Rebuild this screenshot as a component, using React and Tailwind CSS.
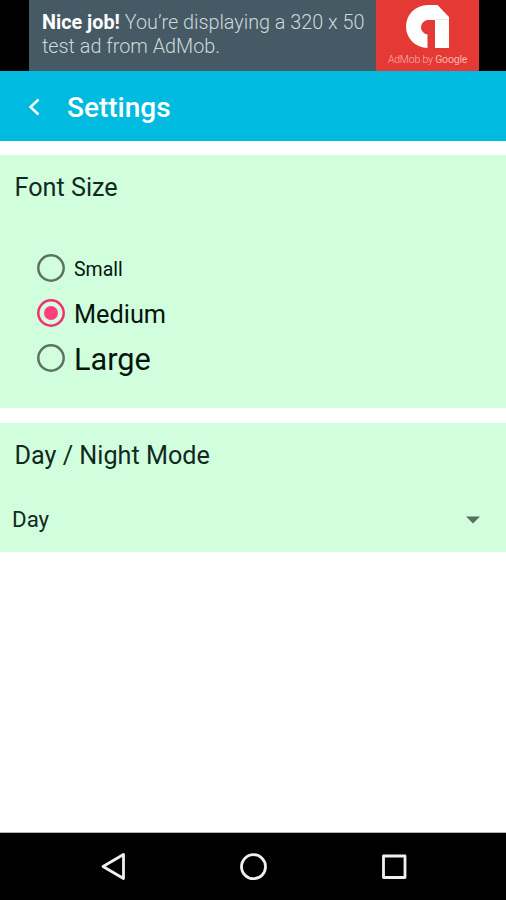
const FONT_SIZES = [
  { label: 'Small', text: 'text-[19.5px] mt-[4px]' },
  { label: 'Medium', text: 'text-[25.3px] mt-[4px]', checked: true },
  { label: 'Large', text: 'text-[30.7px] mt-[5px]' },
];

const AdMobLogo = () => (
  <svg width="44" height="44" viewBox="0 0 44 44" className="mt-[5px]">
    <path
      d="M21.5 0H31.5L43 12V43H29V15H21.5A7.3 7.3 0 0 0 21.5 29.5V43A21.5 21.5 0 0 1 21.5 0Z"
      fill="#fff"
    />
    <path d="M29 14.5H42.5" stroke="#e4e4e4" strokeWidth="0.8" />
  </svg>
);

const AdBanner = () => (
  <div className="h-[71px] flex pl-[29px] bg-black">
    <div className="w-[347px] pl-[13px] pt-[11px] bg-[#455a64] text-[19.8px] leading-[24px] text-[#cfd8dc] font-light whitespace-nowrap">
      <div><b className="font-bold text-white">Nice job!</b> You’re displaying a 320 x 50</div>
      <div>test ad from AdMob.</div>
    </div>
    <div className="w-[103px] flex flex-col items-center bg-[#e53935]">
      <AdMobLogo />
      <span className="mt-[4px] text-[10.5px] leading-[13px] tracking-[-0.2px] font-light text-[#f5b5b3] whitespace-nowrap">
        AdMob by <span className="font-normal">Google</span>
      </span>
    </div>
  </div>
);

const Header = () => (
  <header className="h-[70px] flex items-center bg-[#00badf] text-white">
    <svg width="12" height="18" viewBox="0 0 12 18" className="ml-[28px] mt-[2px]" fill="none" stroke="#fff" strokeWidth="2.4">
      <path d="M10.5 1.5L2.5 9L10.5 16.5" />
    </svg>
    <h1 className="ml-[27px] mt-[3px] text-[28px] leading-8 font-medium">Settings</h1>
  </header>
);

const Radio = ({ checked }) => (
  <svg width="28" height="28" viewBox="0 0 28 28" fill="none" className="shrink-0">
    <circle cx="14" cy="14" r="12.7" strokeWidth="2.5" stroke={checked ? '#f52d74' : '#5c7363'} />
    {checked && <circle cx="14" cy="14" r="7" fill="#ff3d7f" />}
  </svg>
);

const NavBar = () => (
  <nav className="h-[68px] flex bg-black border-t border-[#b5b5b5]">
    <svg width="506" height="67" viewBox="0 0 506 67" fill="none" stroke="#f0f0f0" strokeWidth="2.8" strokeLinejoin="round">
      <path d="M123.5 21.5V45.5L103 33.5Z" />
      <circle cx="253.5" cy="33.7" r="12" />
      <rect x="383.5" y="23" width="21.5" height="21.5" />
    </svg>
  </nav>
);

export default function App() {
  return (
    <div className="w-[506px] h-[900px] flex flex-col overflow-hidden bg-white font-['Roboto',sans-serif]">
      <AdBanner />
      <Header />

      <main className="flex-1 flex flex-col gap-[15px] pt-[14px]">
        {/* Font size */}
        <section className="h-[253px] bg-[#d1ffde] pt-[17px]">
          <h2 className="ml-[14.5px] text-[25.2px] leading-8 text-[#12291f]">Font Size</h2>
          <div className="ml-[37px] mt-[41px]">
            {FONT_SIZES.map((size) => (
              <label key={size.label} className="h-[45px] flex items-center gap-[9px]">
                <Radio checked={size.checked} />
                <span className={`${size.text} leading-8 text-[#07150c]`}>{size.label}</span>
              </label>
            ))}
          </div>
        </section>

        {/* Day / night mode */}
        <section className="h-[129px] bg-[#d1ffde] pt-[17px]">
          <h2 className="ml-[14.5px] text-[25.2px] leading-8 text-[#12291f]">Day / Night Mode</h2>
          <div className="mt-[32px] pl-[12px] pr-[26px] h-8 flex items-center justify-between">
            <span className="-mt-[2px] text-[22.3px] leading-8 text-[#12291f]">Day</span>
            <svg width="14" height="8" viewBox="0 0 14 8">
              <path d="M0 0.5H14L7 7.5Z" fill="#54705f" />
            </svg>
          </div>
        </section>
      </main>

      <NavBar />
    </div>
  );
}
